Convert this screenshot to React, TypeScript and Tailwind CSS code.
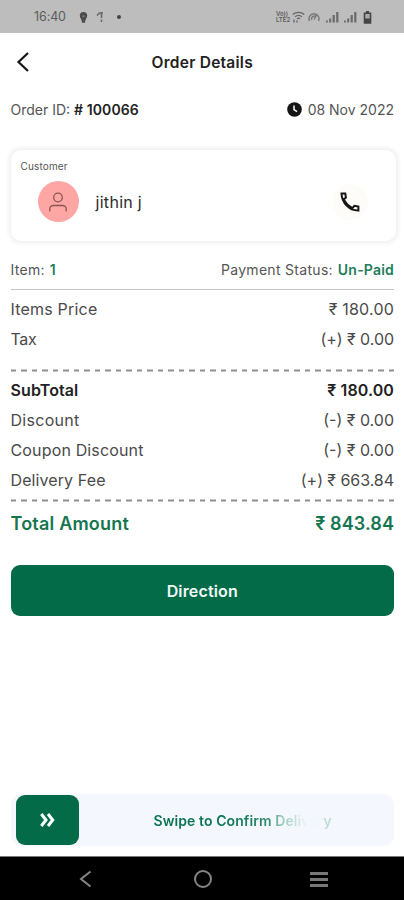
import { clsx } from "clsx";

type PriceRow = { label: string; value: string; bold?: boolean; labelClass: string; valueClass: string };

const ITEM_ROWS: PriceRow[] = [
  { label: "Items Price", value: "₹ 180.00", labelClass: "tracking-[0.2px]", valueClass: "tracking-[0.2px]" },
  { label: "Tax", value: "(+) ₹ 0.00", labelClass: "tracking-[-0.3px]", valueClass: "tracking-[-0.05px]" },
];

const TOTAL_ROWS: PriceRow[] = [
  { label: "SubTotal", value: "₹ 180.00", bold: true, labelClass: "tracking-[0.1px]", valueClass: "tracking-[0.1px]" },
  { label: "Discount", value: "(-) ₹ 0.00", labelClass: "tracking-[0.3px]", valueClass: "tracking-[0px]" },
  { label: "Coupon Discount", value: "(-) ₹ 0.00", labelClass: "tracking-[0.15px]", valueClass: "tracking-[0px]" },
  { label: "Delivery Fee", value: "(+) ₹ 663.84", labelClass: "tracking-[0.1px]", valueClass: "tracking-[-0.05px]" },
];

function SignalIcon() {
  return (
    <svg width="13" height="12" viewBox="0 0 13 12" fill="#6a6a6a">
      <rect x="0" y="9.5" width="1.8" height="2" />
      <rect x="3.2" y="7.5" width="2" height="4" />
      <rect x="6.6" y="4" width="2.2" height="7.5" />
      <rect x="10.2" y="1" width="2.2" height="10.5" />
    </svg>
  );
}

function StatusBar() {
  return (
    <div className="flex h-[33px] shrink-0 items-center justify-between bg-[#bdbdbd] pt-[1px] pr-[32px] pl-[34px] text-[#5c5c5c]">
      <div className="flex items-center">
        <span className="w-[45px] text-[12.5px] tracking-[-0.1px]">16:40</span>
        <svg width="9" height="11" viewBox="0 0 9 11" fill="#4b4b4b">
          <path d="M4.5 0C2 0 .8 1.700 .8 3.600c0 2.600 2.200 4 2.200 7.100h3c0-3.100 2.200-4.500 2.200-7.100C8.200 1.700 7 0 4.500 0z" />
          <circle cx="4.500" cy="4.200" r="1" fill="#888" />
        </svg>
        <svg className="ml-[8px]" width="9" height="12" viewBox="0 0 9 12" fill="none" stroke="#6a6a6a" strokeWidth="1.600">
          <path d="M1 4.500l2.500-2.500h3.500M5.500 1v6M5.500 8.500v2.500" />
        </svg>
        <span className="ml-[12px] h-[4px] w-[4px] rounded-full bg-[#444]" />
      </div>
      <div className="flex items-center">
        <span className="w-[16px] text-[6px] leading-[6px] font-semibold whitespace-nowrap">
          Vo))
          <br />
          LTE2
        </span>
        <svg width="13" height="12" viewBox="0 0 13 12" fill="none" stroke="#666" strokeWidth="1.400">
          <path d="M.7 3.500C4 .7 9 .7 12.300 3.500M3 5.800c2-1.600 5-1.600 7 0M5 7.800c1-.7 2-.7 3 0M2 8.500v3M5 9.500v2" />
        </svg>
        <svg className="ml-[3px]" width="12" height="10" viewBox="0 0 12 10" fill="none" stroke="#777" strokeWidth="1.400">
          <path d="M1.500 9a5 5 0 1 1 9 0M3.800 8a2.700 2.700 0 0 1 4.400-3M6 7.500L8.500 3" />
        </svg>
        <span className="ml-[6px]"><SignalIcon /></span>
        <span className="ml-[5px]"><SignalIcon /></span>
        <svg className="ml-[6px]" width="9" height="13" viewBox="0 0 9 13">
          <path d="M3 0h3v1.500h2.300v11.200H.7V1.500H3z" fill="#444" />
          <rect x="2.300" y="3" width="4.400" height="4.500" fill="#aaa" />
        </svg>
      </div>
    </div>
  );
}

function DashedLine() {
  return (
    <div className="h-[1.5px] translate-y-[0.5px] bg-[repeating-linear-gradient(90deg,#8f8f8f_0_5.25px,transparent_5.25px_10.5px)]" />
  );
}

function PriceRows({ rows }: { rows: PriceRow[] }) {
  return (
    <div>
      {rows.map((row) => (
        <div
          key={row.label}
          className={clsx(
            "flex h-[30px] items-center justify-between text-[16px]",
            row.bold ? "font-semibold text-[#222]" : "text-[#4a4a4a]"
          )}
        >
          <span className={row.labelClass}>{row.label}</span>
          <span className={row.valueClass}>{row.value}</span>
        </div>
      ))}
    </div>
  );
}

function CustomerCard() {
  return (
    <div className="mt-[21px] mr-[-2px] h-[91px] rounded-[10px] bg-white pt-[10px] pl-[10px] shadow-[0_0_5px_2px_rgba(0,0,0,0.07)]">
      <p className="text-[10px] leading-[13px] tracking-[0.15px] text-[#555]">Customer</p>
      <div className="mt-[8px] flex items-center pl-[17px]">
        <div className="flex h-[41px] w-[41px] items-center justify-center rounded-full bg-[#fea6a3]">
          <svg width="20" height="22" viewBox="0 0 20 22" fill="none" stroke="#8b5553" strokeWidth="1.300">
            <circle cx="10" cy="6.500" r="4.300" />
            <path d="M1.800 20.500v-2.500a3.500 3.500 0 0 1 3.500-3.500h9.400a3.500 3.500 0 0 1 3.500 3.500v2.500" />
          </svg>
        </div>
        <span className="ml-[17px] text-[16px] tracking-[0.3px] text-[#2c2c2c]">jithin j</span>
        <div className="mr-[28px] ml-auto flex h-[36px] w-[36px] items-center justify-center rounded-full bg-[#fdfcf8]">
          <svg width="20" height="20" viewBox="0 0 20 20" fill="none" stroke="#151515" strokeWidth="2">
            <path d="M1.500 1.500h3.800l.6 4-2.200 1.800c1.800 3.800 4.700 6.900 8.800 8.800l1.900-2.300 4 .7v4c-9.100.3-16.600-7.600-16.900-17z" />
          </svg>
        </div>
      </div>
    </div>
  );
}

function SwipeButton() {
  return (
    <div className="mt-auto mb-[10px] flex h-[52px] shrink-0 items-center rounded-[10px] bg-[#f4f7fd] pl-[5px]">
      <div className="flex h-[50px] w-[63px] items-center justify-center rounded-[9px] bg-[#036b48]">
        <svg width="15" height="14" viewBox="0 0 15 14" fill="none" stroke="#fff" strokeWidth="3">
          <path d="M1.300 1l4.700 6-4.700 6M8 1l4.700 6L8 13" />
        </svg>
      </div>
      <span className="ml-[75px] bg-[linear-gradient(90deg,#05714d_0%,#0d7853_45%,#2f8a6a_64%,#95c9b8_72%,#c8e2dc_80%,#f2f6fb_86%,#f2f6fb_94%,#bfdcd5_96%)] bg-clip-text text-[14px] font-semibold tracking-[0.08px] whitespace-nowrap text-transparent">
        Swipe to Confirm Delivery
      </span>
    </div>
  );
}

function NavBar() {
  return (
    <div className="flex h-[44px] shrink-0 items-center border-t border-[#777] bg-black pt-[1px] pl-[79px]">
      <svg width="13" height="18" viewBox="0 0 13 18" fill="none" stroke="#858585" strokeWidth="2">
        <path d="M11.500 1.500L2 9l9.500 7.500" />
      </svg>
      <span className="ml-[102px] h-[18px] w-[18px] rounded-full border-2 border-[#858585]" />
      <div className="ml-[97.5px] flex w-[18px] flex-col gap-[3px] pt-[1px]">
        <span className="h-[3px] bg-[#777]" />
        <span className="h-[3px] bg-[#777]" />
        <span className="h-[3px] bg-[#777]" />
      </div>
    </div>
  );
}

export default function App() {
  return (
    <div className="flex h-[900px] w-[404px] flex-col overflow-hidden bg-white font-['Inter','Roboto',sans-serif]">
      <StatusBar />

      <div className="flex flex-1 flex-col pr-[10px] pl-[10.5px]">
        {/* Header */}
        <div className="grid h-[58px] shrink-0 grid-cols-[40px_1fr_40px] items-center">
          <svg className="ml-[5px]" width="14" height="20" viewBox="0 0 14 20" fill="none" stroke="#151515" strokeWidth="2.200">
            <path d="M12 1L2.500 10l9.500 9" />
          </svg>
          <h1 className="pt-[1px] text-center text-[15.5px] font-semibold tracking-[0.25px] text-[#222]">Order Details</h1>
        </div>

        <div className="flex h-[37px] shrink-0 items-center justify-between text-[14px] text-[#555]">
          <p>
            Order ID: <span className="font-semibold tracking-[0.1px] text-[#222]"># 100066</span>
          </p>
          <div className="flex items-center gap-[6px]">
            <svg width="15" height="15" viewBox="0 0 15 15">
              <circle cx="7.500" cy="7.500" r="7.300" fill="#151515" />
              <path d="M7 3.500v4.200l3 2" fill="none" stroke="#fff" strokeWidth="1.500" />
            </svg>
            <span>08 Nov 2022</span>
          </div>
        </div>

        <div className="pt-[1px]">
          <CustomerCard />
        </div>

        <div className="mt-[10px] flex h-[39px] shrink-0 items-center justify-between border-b border-[#c4c4c4] pb-[1px] text-[14px] text-[#555]">
          <p>
            <span className="tracking-[0.3px]">Item:</span>{" "}
            <span className="ml-[1px] font-semibold text-[#1d7d5a]">1</span>
          </p>
          <p>
            <span className="tracking-[0.3px]">Payment Status:</span>{" "}
            <span className="ml-[1px] font-semibold tracking-[0.2px] text-[#1d7d5a]">Un-Paid</span>
          </p>
        </div>

        <div className="pt-[4px] pb-[15px]">
          <PriceRows rows={ITEM_ROWS} />
        </div>
        <DashedLine />
        <div className="pt-[4.5px] pb-[4px]">
          <PriceRows rows={TOTAL_ROWS} />
        </div>
        <DashedLine />

        <div className="mt-[4px] flex h-[37px] items-center justify-between text-[18px] font-semibold text-[#14764f]">
          <span className="tracking-[0.2px]">Total Amount</span>
          <span className="tracking-[0.1px]">₹ 843.84</span>
        </div>

        <button className="mt-[23.5px] h-[51px] shrink-0 rounded-[9px] bg-[#036b48] text-[16px] font-semibold tracking-[0.15px] text-[#f2faf7]">
          Direction
        </button>

        <SwipeButton />
      </div>

      <NavBar />
    </div>
  );
}
